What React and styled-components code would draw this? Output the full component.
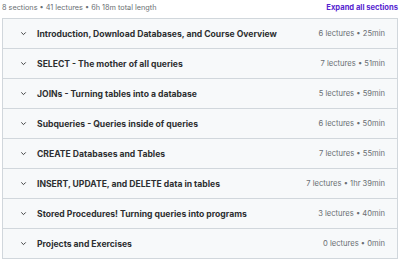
import React from "react";
import styled, { createGlobalStyle } from "styled-components";

const Global = createGlobalStyle`
  html, body { margin: 0; padding: 0; background: #fff; }
  body { font-family: Inter, "Liberation Sans", sans-serif; color: #2d2f31; }
`;

const Wrap = styled.div`
  width: 396px;
  padding: 0 3px 0 2px;
`;

const Header = styled.div`
  display: flex;
  align-items: center;
  justify-content: space-between;
  height: 15px;
  padding-bottom: 3px;
`;

const Summary = styled.span`
  font-size: 7.3px;
  color: #6a6f73;
`;

const ExpandAll = styled.button`
  border: 0;
  background: none;
  padding: 0;
  font-family: inherit;
  font-size: 7.6px;
  font-weight: 700;
  color: #5624d0;
  cursor: pointer;
`;

const List = styled.div`
  border: 1px solid #d1d7dc;
  border-bottom: 0;
`;

const Row = styled.div`
  display: flex;
  align-items: center;
  height: 29px;
  padding: 0 12px 0 17px;
  background: #f7f9fa;
  border-bottom: 1px solid #d1d7dc;
`;

const Chevron = styled.svg`
  width: 7px;
  height: 7px;
  flex: none;
  margin-right: 10px;
`;

const Title = styled.span`
  flex: 1;
  font-size: 8.6px;
  font-weight: 700;
  color: #2d2f31;
  white-space: nowrap;
`;

const Meta = styled.span`
  font-size: 7.6px;
  color: #6a6f73;
  white-space: nowrap;
`;

const sections = [
  ["Introduction, Download Databases, and Course Overview", 6, "25min"],
  ["SELECT - The mother of all queries", 7, "51min"],
  ["JOINs - Turning tables into a database", 5, "59min"],
  ["Subqueries - Queries inside of queries", 6, "50min"],
  ["CREATE Databases and Tables", 7, "55min"],
  ["INSERT, UPDATE, and DELETE data in tables", 7, "1hr 39min"],
  ["Stored Procedures! Turning queries into programs", 3, "40min"],
  ["Projects and Exercises", 0, "0min"],
];

export default function App() {
  return (
    <Wrap>
      <Global />
      <Header>
        <Summary>8 sections • 41 lectures • 6h 18m total length</Summary>
        <ExpandAll>Expand all sections</ExpandAll>
      </Header>
      <List>
        {sections.map(([t, n, d]) => (
          <Row key={t}>
            <Chevron viewBox="0 0 10 10">
              <path d="M2.2 3.8 L5 6.6 L7.8 3.8" fill="none" stroke="#2d2f31" strokeWidth="1.3" strokeLinecap="round" strokeLinejoin="round" />
            </Chevron>
            <Title>{t}</Title>
            <Meta>{n} lectures • {d}</Meta>
          </Row>
        ))}
      </List>
    </Wrap>
  );
}
